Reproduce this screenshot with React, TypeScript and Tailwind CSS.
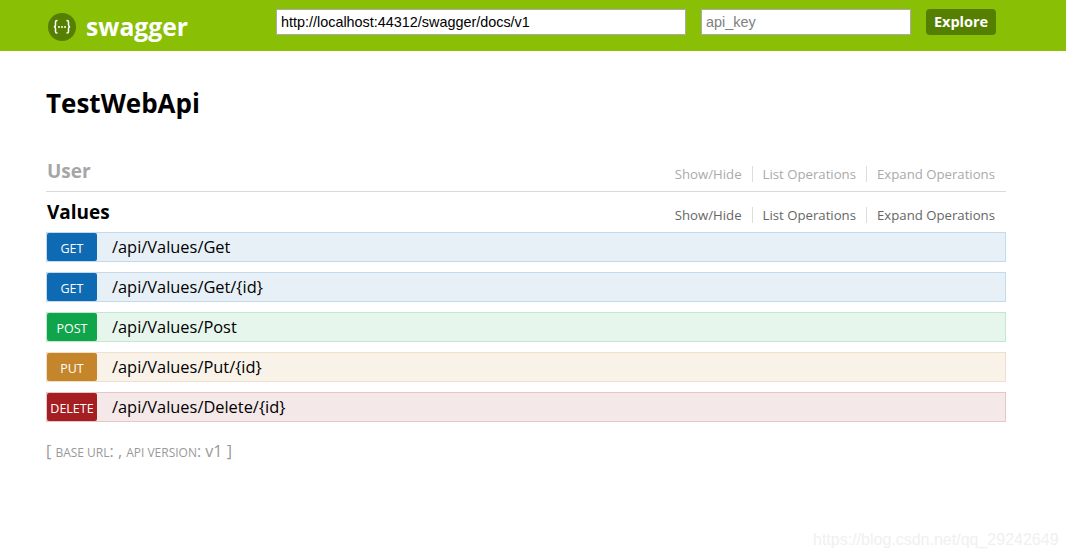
import React from 'react'

const ops = [
  { method: 'GET', path: '/api/Values/Get', badge: 'bg-[#0f6ab4]', row: 'bg-[#e7f0f7] border-[#c3d9ec]' },
  { method: 'GET', path: '/api/Values/Get/{id}', badge: 'bg-[#0f6ab4]', row: 'bg-[#e7f0f7] border-[#c3d9ec]' },
  { method: 'POST', path: '/api/Values/Post', badge: 'bg-[#10a54a]', row: 'bg-[#e7f6ec] border-[#c3e8d1]' },
  { method: 'PUT', path: '/api/Values/Put/{id}', badge: 'bg-[#c5862b]', row: 'bg-[#f9f2e9] border-[#f0e0ca]' },
  { method: 'DELETE', path: '/api/Values/Delete/{id}', badge: 'bg-[#a41e22]', row: 'bg-[#f5e8e8] border-[#e8c6c7]' },
]

const SectionLinks = ({ muted }: { muted?: boolean }) => (
  <div className={`mt-[6px] flex items-center text-[13.2px] leading-4 ${muted ? 'text-[#aaaaaa]' : 'text-[#666666]'}`}>
    <span className="pr-[10px] border-r border-[#dddddd]">Show/Hide</span>
    <span className="px-[10px] border-r border-[#dddddd]">List Operations</span>
    <span className="pl-[10px] pr-[11px]">Expand Operations</span>
  </div>
)

const Logo = () => (
  <div className="ml-[1px] mt-[4px] w-[28px] h-[28px] rounded-full bg-[#547f00] flex items-center justify-center">
    <svg width="28" height="28" viewBox="0 0 28 28" fill="none" stroke="white" strokeWidth="1.5">
      <path d="M9.5 7.5H9C7.8 7.5 7.5 8.2 7.5 9.2V12C7.5 13 7 13.6 6 13.8C7 14 7.5 14.6 7.5 15.6V18.4C7.5 19.4 7.8 20 9 20H9.5" />
      <path d="M18.5 7.5H19C20.2 7.5 20.5 8.2 20.5 9.2V12C20.5 13 21 13.6 22 13.8C21 14 20.5 14.6 20.5 15.6V18.4C20.5 19.4 20.2 20 19 20H18.5" />
      <circle cx="11" cy="14" r="1" fill="white" stroke="none" />
      <circle cx="14" cy="14" r="1" fill="white" stroke="none" />
      <circle cx="17" cy="14" r="1" fill="white" stroke="none" />
    </svg>
  </div>
)

export default function App() {
  return (
    <div className="w-[1066px] h-[557px] bg-white relative overflow-hidden font-['Open_Sans',sans-serif] text-black">
      <header className="h-[51px] bg-[#89bf04] flex items-start pl-[47px] pt-[9px]">
        <div className="w-[229px] flex items-start gap-[10px]">
          <Logo />
          <span className="mt-[3px] text-white text-[24.7px] font-bold leading-[30px]">swagger</span>
        </div>
        <input
          readOnly
          value="http://localhost:44312/swagger/docs/v1"
          className="w-[410px] h-[26px] bg-white border border-[#aaaaaa] px-1 text-[14.4px] text-black font-['Liberation_Sans',sans-serif] outline-none"
        />
        <input
          readOnly
          placeholder="api_key"
          className="ml-[15px] w-[210px] h-[26px] bg-white border border-[#aaaaaa] px-1 text-[14.4px] font-['Liberation_Sans',sans-serif] placeholder:text-[#808080] outline-none"
        />
        <button className="ml-[15px] w-[70px] h-[26px] rounded-[4px] bg-[#547f00] text-white text-[14.5px] font-bold leading-none">
          Explore
        </button>
      </header>

      <main className="w-[960px] ml-[46px]">
        <h1 className="mt-[34px] text-[26px] leading-9 font-bold">TestWebApi</h1>

        <div className="mt-[30px] h-[41px] border-b border-[#d9d9d9] flex items-center justify-between pl-[1px] pb-[1px]">
          <span className="text-[19px] leading-6 font-bold text-[#a6a6a6]">User</span>
          <SectionLinks muted />
        </div>

        <div className="h-[40px] flex items-center justify-between pl-[1px]">
          <span className="text-[19px] leading-6 font-bold">Values</span>
          <SectionLinks />
        </div>

        <div className="flex flex-col gap-[10px]">
          {ops.map((op) => (
            <div key={op.path} className={`h-[30px] border flex items-center ${op.row}`}>
              <span className={`w-[50px] h-[28px] pt-[4px] rounded-[2px] flex items-center justify-center text-white text-[12.5px] ${op.badge}`}>
                {op.method}
              </span>
              <span className="ml-[15px] text-[16.4px] leading-5">{op.path}</span>
            </div>
          ))}
        </div>

        <div className="mt-[19px] text-[16px] leading-5 text-[#999999]">
          [ <span className="text-[12px]">BASE URL</span>: , <span className="text-[12px]">API VERSION</span>: v1 ]
        </div>
      </main>

      <span className="absolute left-[813px] top-[530px] text-[16px] leading-5 text-[#f0f0f0] font-['Liberation_Sans',sans-serif]">
        https://blog.csdn.net/qq_29242649
      </span>
    </div>
  )
}
